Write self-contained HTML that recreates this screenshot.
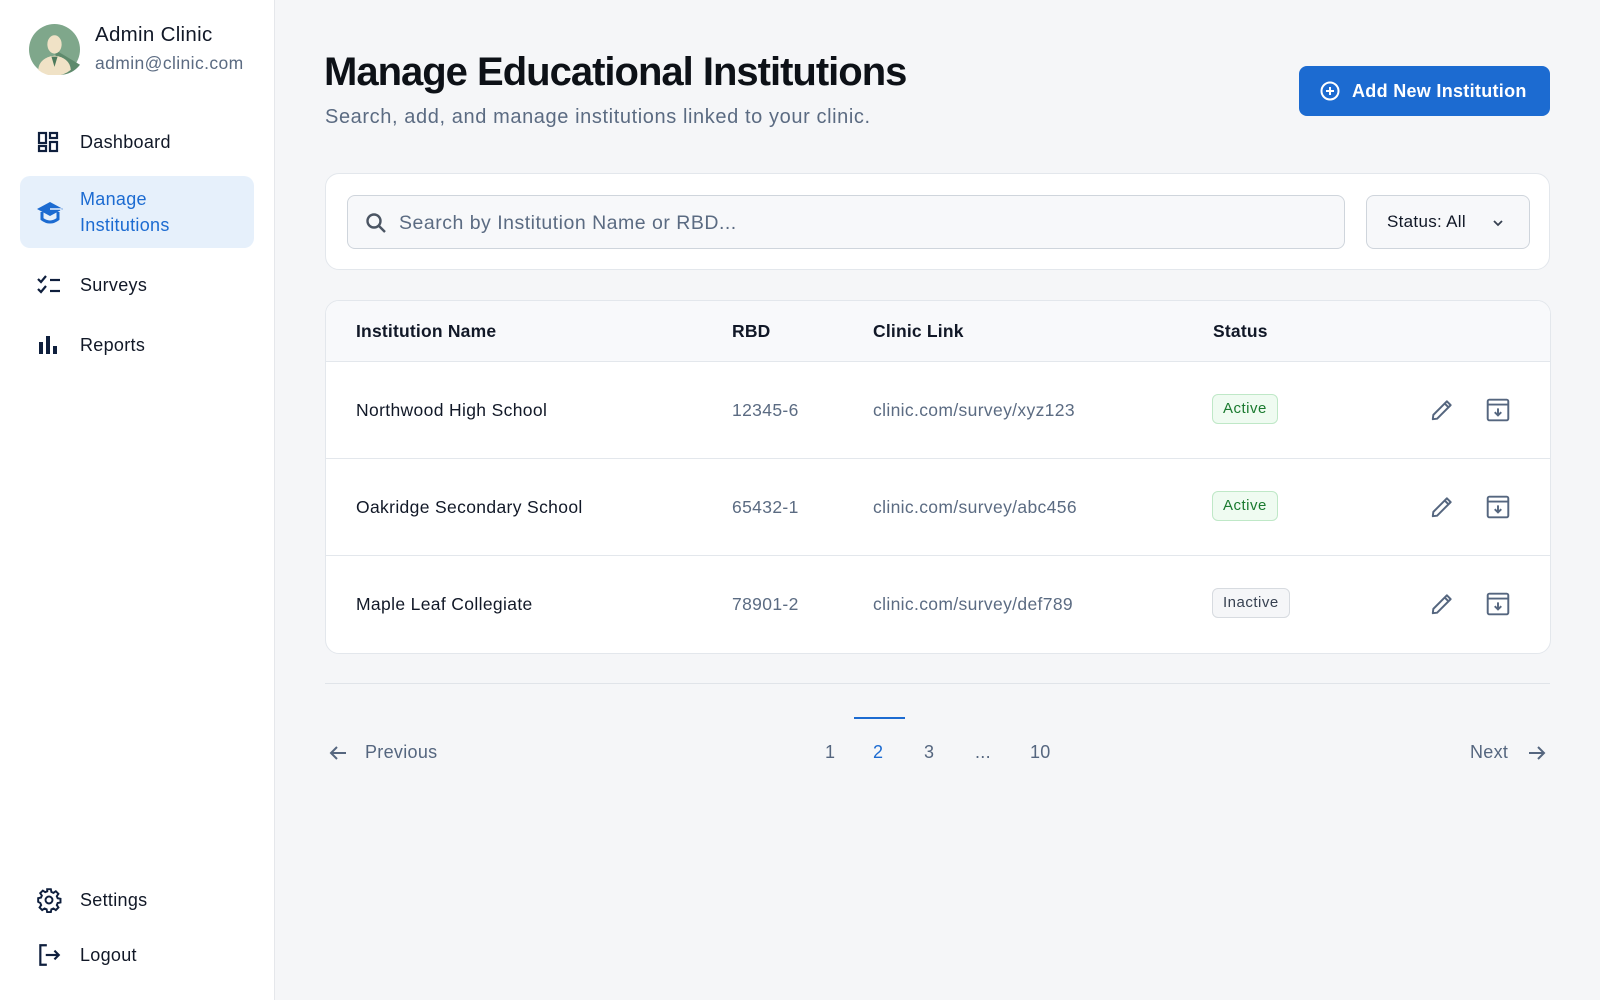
<!DOCTYPE html>
<html><head><meta charset="utf-8"><style>
*{box-sizing:border-box;margin:0;padding:0}
body{width:1600px;height:1000px;background:#f5f6f8;font-family:"Liberation Sans",sans-serif;color:#111827;position:relative;overflow:hidden}
.side{position:absolute;left:0;top:0;width:275px;height:1000px;background:#fff;border-right:1px solid #e5e7eb}
.abs{position:absolute}
.nav{position:absolute;left:20px;width:234px;display:flex;align-items:center;font-size:18px;color:#111827;letter-spacing:0.3px}
.nav svg{position:absolute;left:16px}
.nav span{position:absolute;left:60px}
.card{position:absolute;background:#fff;border:1px solid #e3e7ec;border-radius:14px}
.row{position:absolute;left:0;width:1224px;height:97px;border-top:1px solid #e3e7ec;font-size:17.5px;letter-spacing:0.35px}
.row div{position:absolute;top:38px}
.badge{position:absolute;top:32px!important;left:886px;height:30px;padding:0 10px;border-radius:6px;font-size:15px;line-height:28px;letter-spacing:0.5px}
.act{background:#effbf1;border:1px solid #bfe8c7;color:#1a7a2f}
.ina{background:#f5f6f8;border:1px solid #d7dbe0;color:#374151}
.ic{position:absolute}
.pg{position:absolute;top:742px;font-size:18px;color:#55667f;letter-spacing:0.3px}
</style></head><body>
<div class="side">
  <svg class="abs" style="left:29px;top:24px" width="51" height="51" viewBox="0 0 50 50"><circle cx="25" cy="25" r="25" fill="#7fa78b"/><path d="M25 25 L50 40 A25 25 0 0 1 30 50Z" fill="#5e8a6c"/><path d="M9 45 Q10 33 25 31 Q40 33 41 45 A25 25 0 0 1 9 45Z" fill="#f0e2c6"/><path d="M22 32 L25 42 L28 32Z" fill="#4d7a5c"/><ellipse cx="25" cy="20" rx="7" ry="9" fill="#f0e2c6"/></svg>
  <div class="abs" style="left:95px;top:23px;font-size:20.5px;color:#111827;letter-spacing:0.3px">Admin Clinic</div>
  <div class="abs" style="left:95px;top:53px;font-size:17.5px;color:#5b6b82;letter-spacing:0.4px">admin@clinic.com</div>

  <div class="nav" style="top:122px;height:40px"><svg width="24" height="24" viewBox="0 0 24 24" fill="none" stroke="#0f1f3d" stroke-width="2.2"><rect x="3" y="3" width="7" height="10"/><rect x="14" y="3" width="7" height="5"/><rect x="3" y="16" width="7" height="5"/><rect x="14" y="12" width="7" height="9"/></svg><span>Dashboard</span></div>
  <div class="nav" style="top:176px;height:72px;background:#e6f0fb;border-radius:10px;color:#1c6bd1"><svg width="28" height="24" viewBox="0 0 28 24"><path d="M14 2 L27 9 L14 16 L1 9Z" fill="#1c6bd1"/><path d="M6 12 V19 Q14 25 22 19 V12" fill="none" stroke="#1c6bd1" stroke-width="3"/><path d="M14 9 L25 9 V17" fill="none" stroke="#e6f0fb" stroke-width="1.5"/></svg><span style="line-height:26px">Manage<br>Institutions</span></div>
  <div class="nav" style="top:265px;height:40px"><svg width="26" height="24" viewBox="0 0 26 24" fill="none" stroke="#0f1f3d" stroke-width="2.2"><path d="M2 6 L5 9 L10 3"/><path d="M2 16 L5 19 L10 13"/><path d="M14 7 H24"/><path d="M14 18 H24"/></svg><span>Surveys</span></div>
  <div class="nav" style="top:325px;height:40px"><svg width="24" height="24" viewBox="0 0 24 24" fill="#0f1f3d"><rect x="3" y="9" width="4" height="12"/><rect x="10" y="3" width="4" height="18"/><rect x="17" y="13" width="4" height="8"/></svg><span>Reports</span></div>
  <div class="nav" style="top:880px;height:40px"><svg width="26" height="26" viewBox="0 0 24 24" fill="none" stroke="#0f1f3d" stroke-width="1.8"><circle cx="12" cy="12" r="3.2"/><path d="M10.3 2h3.4l.5 2.6 1.9.8 2.2-1.5 2.4 2.4-1.5 2.2.8 1.9 2.6.5v3.4l-2.6.5-.8 1.9 1.5 2.2-2.4 2.4-2.2-1.5-1.9.8-.5 2.6h-3.4l-.5-2.6-1.9-.8-2.2 1.5-2.4-2.4 1.5-2.2-.8-1.9L2 13.7v-3.4l2.6-.5.8-1.9-1.5-2.2 2.4-2.4 2.2 1.5 1.9-.8z"/></svg><span>Settings</span></div>
  <div class="nav" style="top:935px;height:40px"><svg width="26" height="26" viewBox="0 0 24 24" fill="none" stroke="#0f1f3d" stroke-width="2"><path d="M10 3 H4 V21 H10"/><path d="M9 12 H21"/><path d="M17 8 L21 12 L17 16"/></svg><span>Logout</span></div>
</div>

<div class="abs" style="left:324px;top:50px;font-size:40px;font-weight:bold;letter-spacing:-1px;color:#0d1117">Manage Educational Institutions</div>
<div class="abs" style="left:325px;top:106px;font-size:20px;color:#5b6b82;letter-spacing:0.6px">Search, add, and manage institutions linked to your clinic.</div>
<div class="abs" style="left:1299px;top:66px;width:251px;height:50px;background:#1c6bd1;border-radius:8px;color:#fff;font-size:18px;font-weight:bold;line-height:50px;padding-left:53px;letter-spacing:0.3px">Add New Institution
  <svg class="abs" style="left:20px;top:14px" width="22" height="22" viewBox="0 0 22 22" fill="none" stroke="#fff" stroke-width="2"><circle cx="11" cy="11" r="8.5"/><path d="M11 7v8M7 11h8"/></svg></div>

<div class="card" style="left:325px;top:173px;width:1225px;height:97px">
  <div class="abs" style="left:21px;top:21px;width:998px;height:54px;border:1px solid #cfd5dc;border-radius:8px;background:#f7f8fa">
    <svg class="abs" style="left:16px;top:15px" width="24" height="24" viewBox="0 0 24 24" fill="none" stroke="#4b5563" stroke-width="2.4"><circle cx="10" cy="10" r="6.5"/><path d="M15 15 L21 21"/></svg>
    <div class="abs" style="left:51px;top:16px;font-size:19.5px;color:#5b6b82;letter-spacing:0.5px">Search by Institution Name or RBD...</div></div>
  <div class="abs" style="left:1040px;top:21px;width:164px;height:54px;border:1px solid #cfd5dc;border-radius:8px;background:#f7f8fa;font-size:17px;line-height:52px;padding-left:20px;color:#111827;letter-spacing:0.3px">Status: All
    <svg class="abs" style="left:124px;top:20px" width="14" height="14" viewBox="0 0 14 14" fill="none" stroke="#374151" stroke-width="1.8"><path d="M3 5 L7 9 L11 5"/></svg></div>
</div>

<div class="card" style="left:325px;top:300px;width:1226px;height:354px;overflow:hidden">
  <div class="abs" style="left:0;top:0;width:1226px;height:60px;background:#f8f9fb;font-size:17.5px;font-weight:bold;letter-spacing:0.2px">
    <div class="abs" style="left:30px;top:20px">Institution Name</div>
    <div class="abs" style="left:406px;top:20px">RBD</div>
    <div class="abs" style="left:547px;top:20px">Clinic Link</div>
    <div class="abs" style="left:887px;top:20px">Status</div>
  </div>
  <div class="row" style="top:60px"><div style="left:30px">Northwood High School</div><div style="left:406px;color:#5b6b82">12345-6</div><div style="left:547px;color:#5b6b82">clinic.com/survey/xyz123</div><div class="badge act">Active</div></div>
  <div class="row" style="top:157px"><div style="left:30px">Oakridge Secondary School</div><div style="left:406px;color:#5b6b82">65432-1</div><div style="left:547px;color:#5b6b82">clinic.com/survey/abc456</div><div class="badge act">Active</div></div>
  <div class="row" style="top:254px"><div style="left:30px">Maple Leaf Collegiate</div><div style="left:406px;color:#5b6b82">78901-2</div><div style="left:547px;color:#5b6b82">clinic.com/survey/def789</div><div class="badge ina">Inactive</div></div>
</div>
<svg width="0" height="0" style="position:absolute"><defs>
<symbol id="pen" viewBox="0 0 24 24"><path d="M3.5 20.5 L4 16.5 L16.5 4 L20 7.5 L7.5 20 Z M14.5 6 L18 9.5" fill="none" stroke="#55667f" stroke-width="1.8" stroke-linejoin="round"/></symbol>
<symbol id="arc" viewBox="0 0 24 24"><g fill="none" stroke="#55667f" stroke-width="1.8"><rect x="2.5" y="2.5" width="19" height="19" rx="1.5"/><path d="M2.5 7 H21.5"/><path d="M12 10.5 V17 M9 14 L12 17 L15 14"/></g></symbol>
</defs></svg>
<svg class="ic" style="left:1429px;top:397px" width="26" height="26"><use href="#pen"/></svg>
<svg class="ic" style="left:1485px;top:397px" width="26" height="26"><use href="#arc"/></svg>
<svg class="ic" style="left:1429px;top:494px" width="26" height="26"><use href="#pen"/></svg>
<svg class="ic" style="left:1485px;top:494px" width="26" height="26"><use href="#arc"/></svg>
<svg class="ic" style="left:1429px;top:591px" width="26" height="26"><use href="#pen"/></svg>
<svg class="ic" style="left:1485px;top:591px" width="26" height="26"><use href="#arc"/></svg>

<div class="abs" style="left:325px;top:683px;width:1225px;height:1px;background:#e0e4e9"></div>
<div class="abs" style="left:854px;top:717px;width:51px;height:2px;background:#1c6bd1"></div>
<svg class="abs" style="left:327px;top:742px" width="22" height="22" viewBox="0 0 22 22" fill="none" stroke="#55667f" stroke-width="2"><path d="M19 11 H4 M10 5 L4 11 L10 17"/></svg>
<div class="pg" style="left:365px">Previous</div>
<div class="pg" style="left:825px">1</div>
<div class="pg" style="left:873px;color:#1c6bd1">2</div>
<div class="pg" style="left:924px">3</div>
<div class="pg" style="left:975px">...</div>
<div class="pg" style="left:1030px">10</div>
<div class="pg" style="left:1470px">Next</div>
<svg class="abs" style="left:1526px;top:742px" width="22" height="22" viewBox="0 0 22 22" fill="none" stroke="#55667f" stroke-width="2"><path d="M3 11 H18 M12 5 L18 11 L12 17"/></svg>
</body></html>
